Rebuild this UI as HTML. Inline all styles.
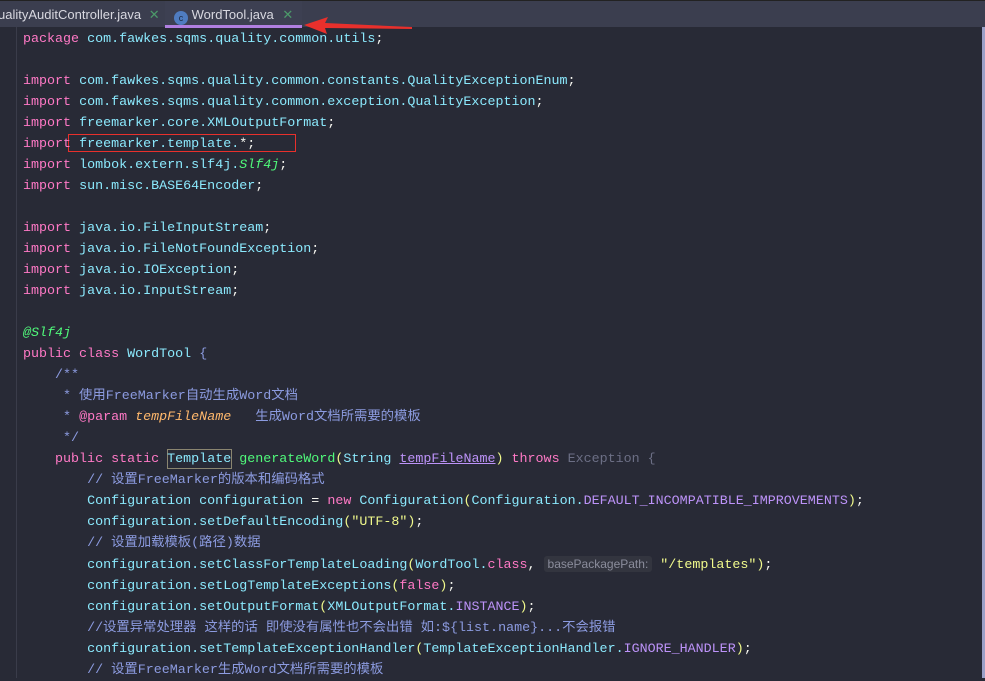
<!DOCTYPE html>
<html><head><meta charset="utf-8"><style>
*{margin:0;padding:0;box-sizing:border-box}
body{width:985px;height:678px;overflow:hidden;background:#282a36;font-family:"Liberation Mono","Noto Sans CJK SC",monospace;position:relative}
#tabs{position:absolute;left:0;top:0;width:985px;height:27px;background:#3b3e4f;border-top:1px solid #222;font-family:"Liberation Sans",sans-serif;font-size:13px;color:#d8d8e0}
.tab{position:absolute;top:0;height:27px;line-height:27px}
#gut{position:absolute;left:0;top:27px;width:17px;height:651px;border-right:1px solid #3a3c4a;background:#282a36}
#code{position:absolute;left:23px;top:29px;font-size:13.35px;line-height:21px;white-space:pre;color:#f8f8f2}
.k{color:#ff79c6}.c{color:#8be9fd}.g{color:#50fa7b}.p{color:#bd93f9}.y{color:#f1fa8c}.cm{color:#8c9be0}.o{color:#ffb86c;font-style:italic}.gi{color:#50fa7b;font-style:italic}.gr{color:#6c6f85}
.hint{font-family:"Liberation Sans",sans-serif;font-size:12px;color:#8b8d9c;background:#33353f;border-radius:3px;padding:1px 4px}
</style></head><body>
<div id="tabs">
<div class="tab" style="left:-2px;width:163px">ualityAuditController.java <span style="color:#4c9a6a;margin-left:4px">✕</span></div>
<div class="tab" style="left:165px;width:137px;background:#3d4052;border-bottom:3px solid #b07fe0;padding-left:9px"><span style="display:inline-block;width:14px;height:14px;border-radius:7px;background:#4f7cc0;color:#1d2a40;font-size:9px;line-height:14px;text-align:center;vertical-align:-2px">c</span> WordTool.java <span style="color:#4c9a6a;margin-left:5px">✕</span></div>
</div>
<svg style="position:absolute;left:300px;top:14px" width="120" height="22"><polygon points="4,11 28,3 25,9 112,13 112,15 25,14 27,20" fill="#e8302c"/></svg>
<div id="gut"></div>
<div style="position:absolute;left:982px;top:27px;width:3px;height:651px;background:#9aa0c8"></div>
<div style="position:absolute;left:68px;top:134px;width:228px;height:18px;border:1px solid #e8302c"></div>
<div style="position:absolute;left:167px;top:449px;width:65px;height:20px;border:1px solid #8a8570"></div>
<div id="code"><span class="k">package</span> <span class="c">com.fawkes.sqms.quality.common.utils</span>;

<span class="k">import</span> <span class="c">com.fawkes.sqms.quality.common.constants.QualityExceptionEnum</span>;
<span class="k">import</span> <span class="c">com.fawkes.sqms.quality.common.exception.QualityException</span>;
<span class="k">import</span> <span class="c">freemarker.core.XMLOutputFormat</span>;
<span class="k">import</span> <span class="c">freemarker.template.</span>*;
<span class="k">import</span> <span class="c">lombok.extern.slf4j.</span><span class="gi">Slf4j</span>;
<span class="k">import</span> <span class="c">sun.misc.BASE64Encoder</span>;

<span class="k">import</span> <span class="c">java.io.FileInputStream</span>;
<span class="k">import</span> <span class="c">java.io.FileNotFoundException</span>;
<span class="k">import</span> <span class="c">java.io.IOException</span>;
<span class="k">import</span> <span class="c">java.io.InputStream</span>;

<span class="gi">@Slf4j</span>
<span class="k">public class</span> <span class="c">WordTool</span> <span class="cm">{</span>
    <span class="cm">/**</span>
<span class="cm">     * 使用FreeMarker自动生成Word文档</span>
<span class="cm">     * </span><span class="k">@param</span> <span class="o">tempFileName</span><span class="cm">   生成Word文档所需要的模板</span>
<span class="cm">     */</span>
    <span class="k">public static</span> <span class="c">Template</span> <span class="g">generateWord</span><span class="y">(</span><span class="c">String</span> <span class="o" style="font-style:normal;color:#bd93f9;text-decoration:underline">tempFileName</span><span class="y">)</span> <span class="k">throws</span> <span class="gr">Exception {</span>
        <span class="cm">// 设置FreeMarker的版本和编码格式</span>
        <span class="c">Configuration configuration</span> = <span class="k">new</span> <span class="c">Configuration</span><span class="y">(</span><span class="c">Configuration.</span><span class="p">DEFAULT_INCOMPATIBLE_IMPROVEMENTS</span><span class="y">)</span>;
        <span class="c">configuration.</span><span class="c">setDefaultEncoding</span><span class="y">(</span><span class="y">"UTF-8"</span><span class="y">)</span>;
        <span class="cm">// 设置加载模板(路径)数据</span>
        <span class="c">configuration.setClassForTemplateLoading</span><span class="y">(</span><span class="c">WordTool.</span><span class="k">class</span>, <span class="hint">basePackagePath:</span> <span class="y">"/templates"</span><span class="y">)</span>;
        <span class="c">configuration.setLogTemplateExceptions</span><span class="y">(</span><span class="k">false</span><span class="y">)</span>;
        <span class="c">configuration.setOutputFormat</span><span class="y">(</span><span class="c">XMLOutputFormat.</span><span class="p">INSTANCE</span><span class="y">)</span>;
        <span class="cm">//设置异常处理器 这样的话 即使没有属性也不会出错 如:${list.name}...不会报错</span>
        <span class="c">configuration.setTemplateExceptionHandler</span><span class="y">(</span><span class="c">TemplateExceptionHandler.</span><span class="p">IGNORE_HANDLER</span><span class="y">)</span>;
        <span class="cm">// 设置FreeMarker生成Word文档所需要的模板</span>
</div>
</body></html>
